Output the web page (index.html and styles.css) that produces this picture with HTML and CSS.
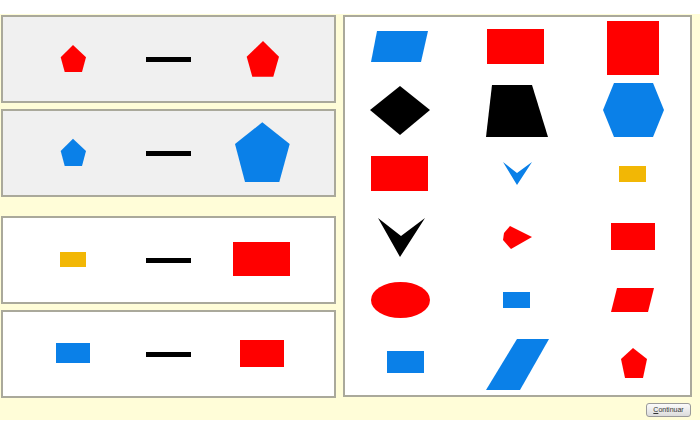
FILE: index.html
```html
<!DOCTYPE html>
<html>
<head>
<meta charset="utf-8">
<link rel="stylesheet" href="styles.css">
</head>
<body>
<div class="stage">
  <div class="top">
    <div class="left">
      <div class="group">
        <div class="panel grey">
          <svg class="cell" viewBox="0 0 95 84"><polygon class="red" points="47,28 60,40.3 56,55 38.7,55 34.7,40.3"/></svg>
          <div class="cell mid"><div class="dash"></div></div>
          <svg class="cell" viewBox="0 0 95 84"><polygon class="red" points="47,24 63,39.7 57.3,59.7 36.3,59.7 30.7,39.7"/></svg>
        </div>
        <div class="panel grey">
          <svg class="cell" viewBox="0 0 95 84"><polygon class="blue" points="47,27.7 60,40 56,55 38.7,55 34.7,40"/></svg>
          <div class="cell mid"><div class="dash"></div></div>
          <svg class="cell" viewBox="0 0 95 84"><polygon class="blue" points="46.3,11.3 73.7,33 63.3,71 29,71 19,33"/></svg>
        </div>
      </div>
      <div class="group">
        <div class="panel white">
          <svg class="cell" viewBox="0 0 95 84"><rect class="yellow" x="34" y="34" width="26" height="15"/></svg>
          <div class="cell mid"><div class="dash"></div></div>
          <svg class="cell" viewBox="0 0 95 84"><rect class="red" x="17" y="24" width="57" height="34"/></svg>
        </div>
        <div class="panel white">
          <svg class="cell" viewBox="0 0 95 84"><rect class="blue" x="30" y="31" width="34" height="20"/></svg>
          <div class="cell mid"><div class="dash"></div></div>
          <svg class="cell" viewBox="0 0 95 84"><rect class="red" x="24" y="28" width="44" height="27"/></svg>
        </div>
      </div>
    </div>
    <div class="board">
      <svg class="gcell" viewBox="0 0 115 63"><polygon class="blue" points="32,14 83,14 76,45 26,45"/></svg>
      <svg class="gcell" viewBox="0 0 115 63"><rect class="red" x="27" y="12" width="57" height="35"/></svg>
      <svg class="gcell" viewBox="0 0 115 63"><rect class="red" x="32" y="4" width="52" height="54"/></svg>

      <svg class="gcell" viewBox="0 0 115 63"><polygon class="black" points="55,6 85,30 55,55 25,30"/></svg>
      <svg class="gcell" viewBox="0 0 115 63"><polygon class="black" points="32,5 72,5 88,57 26,57"/></svg>
      <svg class="gcell" viewBox="0 0 115 63"><polygon class="blue" points="39,3 78,3 89,30 78,57 39,57 28,30"/></svg>

      <svg class="gcell" viewBox="0 0 115 63"><rect class="red" x="26" y="13" width="57" height="35"/></svg>
      <svg class="gcell" viewBox="0 0 115 63"><polygon class="blue" points="43,19 57,30 72,19 57,42"/></svg>
      <svg class="gcell" viewBox="0 0 115 63"><rect class="yellow" x="44" y="23" width="27" height="16"/></svg>

      <svg class="gcell" viewBox="0 0 115 63"><polygon class="black" points="33,12 56,30 80,12 55,51"/></svg>
      <svg class="gcell" viewBox="0 0 115 63"><polygon class="red" points="50,20 72,31 51,43 43,34 44,27"/></svg>
      <svg class="gcell" viewBox="0 0 115 63"><rect class="red" x="36" y="17" width="44" height="27"/></svg>

      <svg class="gcell" viewBox="0 0 115 63"><ellipse class="red" cx="55.5" cy="31" rx="29.5" ry="18"/></svg>
      <svg class="gcell" viewBox="0 0 115 63"><rect class="blue" x="43" y="23" width="27" height="16"/></svg>
      <svg class="gcell" viewBox="0 0 115 63"><polygon class="red" points="42,19 79,19 73,43 36,43"/></svg>

      <svg class="gcell" viewBox="0 0 115 63"><rect class="blue" x="42" y="19" width="37" height="22"/></svg>
      <svg class="gcell" viewBox="0 0 115 63"><polygon class="blue" points="57,7 89,7 60,58 26,58"/></svg>
      <svg class="gcell" viewBox="0 0 115 63"><polygon class="red" points="58,16 72,27 68,46 50,46 46,27"/></svg>
    </div>
  </div>
  <div class="footer">
    <button class="btn"><span class="u">C</span>ontinuar</button>
  </div>
</div>
</body>
</html>
```
FILE: styles.css
```css
html, body {
  margin: 0;
  padding: 0;
  background: #ffffff;
}
body {
  width: 700px;
  height: 434px;
  overflow: hidden;
  font-family: "Liberation Sans", Arial, sans-serif;
}
.stage {
  margin-top: 14px;
  height: 406px;
  box-sizing: border-box;
  padding: 1px 8px 0 1px;
  background: #fffdd8;
  display: flex;
  flex-direction: column;
}
.top {
  display: flex;
  gap: 7px;
  height: 383px;
}
.left {
  width: 335px;
  display: flex;
  flex-direction: column;
  gap: 19px;
}
.group {
  display: flex;
  flex-direction: column;
  gap: 6px;
}
.panel {
  height: 88px;
  box-sizing: border-box;
  border: 2px solid #aaa99b;
  display: flex;
  justify-content: center;
}
.panel.grey { background: #f0f0f0; }
.panel.white { background: #ffffff; }
.cell {
  width: 95px;
  height: 84px;
  display: block;
}
.mid {
  display: flex;
  align-items: center;
  justify-content: center;
}
.dash {
  width: 45px;
  height: 5px;
  background: #000;
}
.board {
  width: 349px;
  height: 382px;
  box-sizing: border-box;
  border: 2px solid #aaa99b;
  background: #ffffff;
  display: grid;
  grid-template-columns: repeat(3, 115px);
  grid-template-rows: repeat(6, 63px);
}
.gcell {
  width: 115px;
  height: 63px;
  display: block;
}
.red { fill: #ff0000; }
.blue { fill: #0a80e8; }
.yellow { fill: #f2b705; }
.black { fill: #000000; }
.footer {
  display: flex;
  justify-content: flex-end;
  margin-top: 5px;
  padding-right: 1px;
}
.btn {
  width: 45px;
  height: 14px;
  padding: 0;
  margin: 0;
  border: 1px solid #9a9a9a;
  border-radius: 3px;
  background: linear-gradient(#fbfbfb, #dcdcdc);
  font-family: "Liberation Sans", Arial, sans-serif;
  font-size: 7px;
  line-height: 12px;
  color: #333;
}
.u { text-decoration: underline; }
```
